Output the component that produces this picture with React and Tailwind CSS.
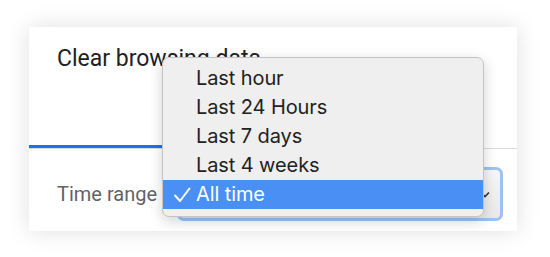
const options = ["Last hour", "Last 24 Hours", "Last 7 days", "Last 4 weeks", "All time"];

function Check() {
  return (
    <svg width="18" height="18" viewBox="0 0 18 18" fill="none">
      <path d="M2 9.5 L7 15 L16.5 2.5" stroke="white" strokeWidth="2" strokeLinecap="round" strokeLinejoin="round" />
    </svg>
  );
}

function TimeMenu() {
  return (
    <div className="absolute left-[133px] top-[30px] w-[322px] rounded-[7px] border border-[#c4c4c4] bg-[#efefef] pt-[6px] pb-[7px] shadow-[0_4px_14px_rgba(0,0,0,0.18)] font-['Inter','Noto_Sans',sans-serif]">
      {options.map((opt) => {
        const selected = opt === "All time";
        return (
          <div
            key={opt}
            className={
              selected
                ? "flex h-[29px] items-center bg-[#4a8ff4] pl-[10px] text-white"
                : "flex h-[29px] items-center pl-[10px] text-[#222222]"
            }
          >
            <span className="flex w-[23px] items-center">{selected ? <Check /> : null}</span>
            <span className="text-[20px] leading-[29px] tracking-[-0.1px]">{opt}</span>
          </div>
        );
      })}
    </div>
  );
}

export default function App() {
  return (
    <div className="min-h-screen bg-white pl-[29px] pt-[27px] font-['Roboto','Liberation_Sans',sans-serif]">
      <div className="relative flex h-[204px] w-[488px] flex-col bg-white shadow-[0_0_22px_rgba(0,0,0,0.13)]">
        <h1 className="pl-[28px] pt-[17px] text-[23px] leading-[29px] text-[#202124]">
          Clear browsing data
        </h1>

        <div className="flex h-[76px] items-end border-b border-[#dadce0]">
          <div className="h-[3px] w-[244px] bg-[#1a73e8]" />
        </div>

        <div className="flex items-center pl-[28px] pt-[18px]">
          <span className="w-[120px] text-[20px] text-[#5f6368]">Time range</span>
          <div className="flex h-[54px] w-[326px] items-center justify-end rounded-[7px] border-[3px] border-[#9fc0f6] bg-gradient-to-b from-[#f6f6f6] to-[#e9e9e9] pr-[10px]">
            <svg width="10" height="7" viewBox="0 0 10 7" fill="none">
              <path d="M1 1.5 L5 5.5 L9 1.5" stroke="#333" strokeWidth="1.6" />
            </svg>
          </div>
        </div>

        <TimeMenu />
      </div>
    </div>
  );
}
